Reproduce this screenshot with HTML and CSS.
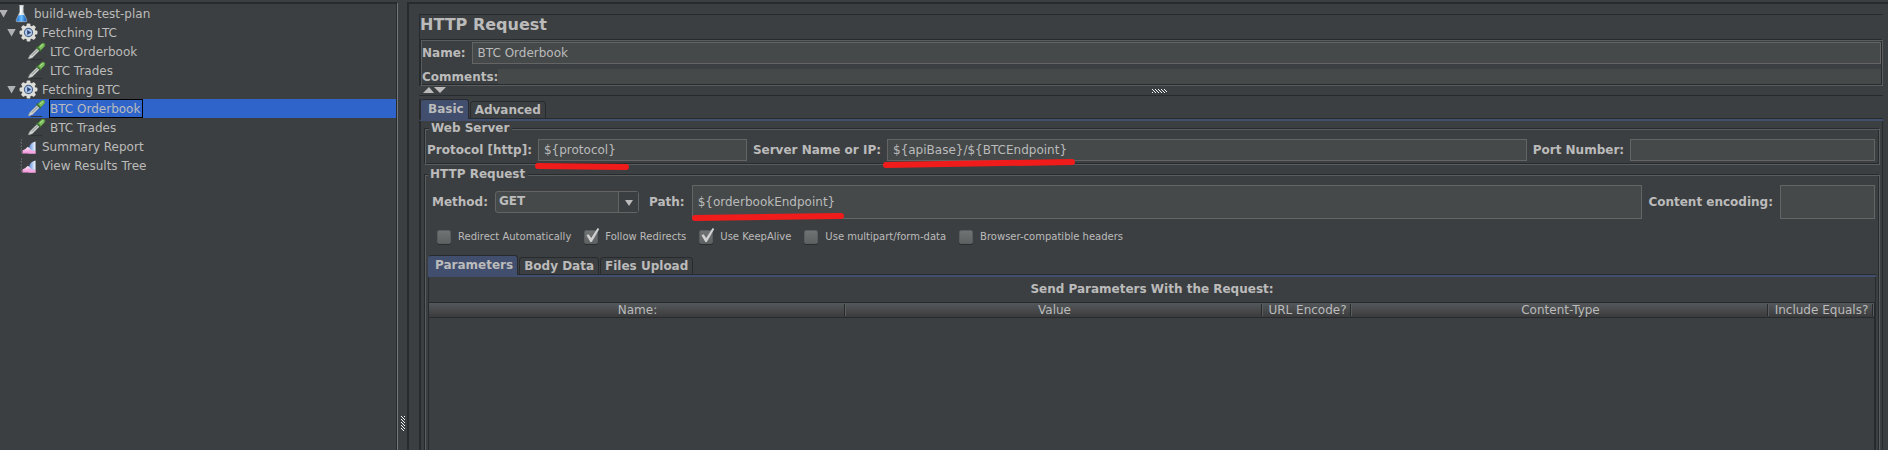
FILE: index.html
```html
<!DOCTYPE html>
<html lang="en">
<head>
<meta charset="utf-8">
<title>build-web-test-plan</title>
<link rel="stylesheet" href="styles.css">
</head>
<body>
<svg class="defs" width="0" height="0" aria-hidden="true">
  <defs>
    <linearGradient id="liquid" x1="0" x2="1" y1="0" y2="0"><stop offset="0" stop-color="#1c6ed8"/><stop offset=".5" stop-color="#6cc0ff"/><stop offset="1" stop-color="#0d4fb4"/></linearGradient>
    <linearGradient id="pink" x1="0" x2="0" y1="0" y2="1"><stop offset="0" stop-color="#fff0fb"/><stop offset="1" stop-color="#f08ad6"/></linearGradient>
    <linearGradient id="blue" x1="0" x2="1" y1="0" y2="0"><stop offset="0" stop-color="#5f8fe0"/><stop offset="1" stop-color="#f4f8ff"/></linearGradient>
    <pattern id="dots" width="3" height="3" patternUnits="userSpaceOnUse"><path fill="#f4f4f4" d="M0 0h1v1H0zM1 1h1v1H1zM2 2h1v1H2z"/></pattern>
    <symbol id="flask" viewBox="0 0 14 20">
      <path d="M5 2.500v6L1.200 17q-.5 2 1.300 2h9q1.800 0 1.300-2L9 8.500v-6z" fill="#dfe6ea" stroke="#8d979c" stroke-width=".6"/>
      <path d="M4 11.500h6l2.400 5.500q.3 1.500-1 1.500H2.600q-1.300 0-1-1.500z" fill="url(#liquid)"/>
      <path d="M4.500 1h5l-.7 1.800H5.200z" fill="#fff"/>
      <path d="M5.800 3h1.200v6L5 13z" fill="#fff"/>
    </symbol>
    <symbol id="gear" viewBox="0 0 20 20">
      <g fill="#deded9">
        <rect x="8" y=".6" width="4" height="18.800" rx="1"/>
        <rect x="8" y=".6" width="4" height="18.800" rx="1" transform="rotate(45 10 10)"/>
        <rect x="8" y=".6" width="4" height="18.800" rx="1" transform="rotate(90 10 10)"/>
        <rect x="8" y=".6" width="4" height="18.800" rx="1" transform="rotate(135 10 10)"/>
        <circle cx="10" cy="10" r="7.400"/>
      </g>
      <circle cx="10" cy="10" r="4.300" fill="#b4c8e8" stroke="#4a658e" stroke-width="1.200"/>
      <path d="M8.600 7.400l4.200 2.600-4.200 2.600z" fill="#27477a"/>
    </symbol>
    <symbol id="dropper" viewBox="0 0 20 19">
      <path d="M4 18h12" stroke="#2c2e2f" stroke-width="1"/>
      <path d="M1.200 17l2-3.500 8-8 2.500 2.500-8 8-3 1z" fill="#d3d7d5" stroke="#8b8f8e" stroke-width=".6"/>
      <path d="M5 14l7-7" stroke="#7b807f" stroke-width="1"/>
      <path d="M10 4.500l4.500 4.500" stroke="#396d2c" stroke-width="1.800"/>
      <path d="M11.500 5l3.500-3.500q2-1.500 3.300-.3t-.1 3.300L14.500 8.200z" fill="#7dbf5e" stroke="#4c8737" stroke-width=".7"/>
      <path d="M13.800 4.500l3-2.500" stroke="#b9e69b" stroke-width="1"/>
    </symbol>
    <symbol id="chart" viewBox="0 0 17 17">
      <path d="M1.500 1v14.500M0 4.500h1M0 8.500h1M0 12.500h1M1.500 15.500h15" stroke="#5c6061" stroke-width="1" stroke-dasharray="2 1" fill="none"/>
      <path d="M2.500 15.500v-3q3-1 5-3.500 2.500 0 4 2.500l4 1.500v2.500z" fill="url(#pink)"/>
      <path d="M15.500 3.500V13q-4.500 0-6.500-3.500 1.500-5 6.500-6z" fill="url(#blue)"/>
      <path d="M9 11.500q2.500 2 6.500 2v2H8.500z" fill="#f3a6e2"/>
    </symbol>
  </defs>
</svg>

<div class="app">
  <nav class="sidebar" aria-label="Test plan">
    <ul class="tree">
      <li class="node root"><span class="toggle"></span><svg class="icon icon-flask"><use href="#flask"/></svg><span class="text">build-web-test-plan</span></li>
      <li class="node group"><span class="toggle"></span><svg class="icon icon-gear"><use href="#gear"/></svg><span class="text">Fetching LTC</span></li>
      <li class="node leaf"><svg class="icon icon-dropper"><use href="#dropper"/></svg><span class="text">LTC Orderbook</span></li>
      <li class="node leaf"><svg class="icon icon-dropper"><use href="#dropper"/></svg><span class="text">LTC Trades</span></li>
      <li class="node group"><span class="toggle"></span><svg class="icon icon-gear"><use href="#gear"/></svg><span class="text">Fetching BTC</span></li>
      <li class="node leaf selected"><svg class="icon icon-dropper"><use href="#dropper"/></svg><span class="text">BTC Orderbook</span></li>
      <li class="node leaf"><svg class="icon icon-dropper"><use href="#dropper"/></svg><span class="text">BTC Trades</span></li>
      <li class="node report"><svg class="icon icon-chart"><use href="#chart"/></svg><span class="text">Summary Report</span></li>
      <li class="node report"><svg class="icon icon-chart"><use href="#chart"/></svg><span class="text">View Results Tree</span></li>
    </ul>
  </nav>
  <div class="splitter"><svg width="4" height="15"><rect width="4" height="15" fill="url(#dots)"/></svg></div>

  <main class="main">
    <section class="summary">
      <h1 class="title">HTTP Request</h1>
      <div class="identity">
        <div class="row"><label for="name">Name:</label><input class="field grow" id="name" type="text" value="BTC Orderbook"></div>
        <div class="row comments"><label for="comments">Comments:</label><input class="field plain grow" id="comments" type="text"></div>
      </div>
    </section>
    <div class="collapse">
      <span class="arrows"><svg width="24" height="6" viewBox="0 0 24 6"><path fill="#bbb" d="M0 6L6 0l5 6zM11 0h12l-6 6z"/></svg></span>
      <svg width="15" height="4"><rect width="15" height="4" fill="url(#dots)"/></svg>
    </div>

    <section class="panel">
      <div class="tabs outer-tabs" role="tablist">
        <button class="tab active" role="tab" aria-selected="true">Basic</button>
        <button class="tab" role="tab" aria-selected="false">Advanced</button>
      </div>
      <div class="panel-body">
        <fieldset class="group-box">
          <legend>Web Server</legend>
          <div class="row server">
            <label for="protocol">Protocol [http]:</label>
            <div class="slot slot-protocol"><input class="field" id="protocol" type="text" value="${protocol}">
              <svg class="mark mark-protocol" width="94" height="8"><path d="M3 3l88 1"/></svg></div>
            <label for="server">Server Name or IP:</label>
            <div class="slot slot-server"><input class="field" id="server" type="text" value="${apiBase}/${BTCEndpoint}">
              <svg class="mark mark-server" width="192" height="9"><path d="M3 6l186-3"/></svg></div>
            <label for="port">Port Number:</label>
            <div class="slot slot-port"><input class="field" id="port" type="text"></div>
          </div>
        </fieldset>

        <fieldset class="group-box request">
          <legend>HTTP Request</legend>
          <div class="row method">
            <label for="method">Method:</label>
            <div class="combo"><select id="method"><option>GET</option></select><span class="combo-arrow"></span></div>
            <label class="path-label" for="path">Path:</label>
            <div class="slot grow"><input class="field tall" id="path" type="text" value="${orderbookEndpoint}">
              <svg class="mark mark-path" width="152" height="9"><path d="M3 5l146-2"/></svg></div>
            <label for="encoding">Content encoding:</label>
            <div class="slot slot-encoding"><input class="field tall" id="encoding" type="text"></div>
          </div>
          <div class="checks">
            <label class="check"><input type="checkbox">Redirect Automatically</label>
            <label class="check"><input type="checkbox" checked>Follow Redirects</label>
            <label class="check"><input type="checkbox" checked>Use KeepAlive</label>
            <label class="check"><input type="checkbox">Use multipart/form-data</label>
            <label class="check"><input type="checkbox">Browser-compatible headers</label>
          </div>
          <div class="inner">
            <div class="tabs" role="tablist">
              <button class="tab active" role="tab" aria-selected="true">Parameters</button>
              <button class="tab" role="tab" aria-selected="false">Body Data</button>
              <button class="tab" role="tab" aria-selected="false">Files Upload</button>
            </div>
            <div class="params">
              <h2 class="caption">Send Parameters With the Request:</h2>
              <div class="table-wrap">
                <table class="table">
                  <colgroup><col><col><col class="col-encode"><col><col class="col-equals"></colgroup>
                  <thead><tr><th>Name:</th><th>Value</th><th>URL Encode?</th><th>Content-Type</th><th>Include Equals?</th></tr></thead>
                  <tbody></tbody>
                </table>
              </div>
            </div>
          </div>
        </fieldset>
      </div>
    </section>
  </main>
</div>
</body>
</html>
```
FILE: styles.css
```css
:root {
  --bg: #3c3f41;
  --dark: #282b2d;
  --light: #5a5d5e;
  --field: #45494a;
  --edge: #646464;
  --text: #bbbbbb;
  --accent: #414e6d;
}

* { box-sizing: border-box; }

body {
  margin: 0;
  background: var(--bg);
  color: var(--text);
  font: 12px/14px "DejaVu Sans", Verdana, sans-serif;
}

input, select, button { font: inherit; color: inherit; }

.defs { position: absolute; }

.app {
  display: flex;
  height: 100vh;
  padding-top: 2px;
  overflow: hidden;
}

/* Tree */
.sidebar {
  flex: 0 0 398px;
  border-top: 2px solid var(--dark);
  border-right: 1px solid #75787a;
}

.tree {
  height: 100%;
  margin: 0;
  padding: 0;
  list-style: none;
  border-right: 1px solid var(--dark);
}

.node {
  display: flex;
  align-items: center;
  height: 19px;
}

.toggle {
  width: 9px;
  height: 8px;
  background: #afb1b3;
  clip-path: polygon(0 0, 100% 0, 50% 100%);
}

.root .toggle { margin-left: -1px; }
.group { padding-left: 7px; }
.leaf { padding-left: 27px; }
.report { padding-left: 20px; }

.icon { flex: none; }
.icon-flask { width: 13px; height: 19px; margin: 0 6px 0 7px; }
.icon-gear { width: 19px; height: 19px; margin: 0 4px 0 3px; }
.icon-dropper { width: 19px; height: 19px; margin-right: 3px; }
.icon-chart { width: 17px; height: 17px; margin-right: 5px; }

.text {
  height: 19px;
  padding: 1px 2px 0 0;
  border: 1px solid transparent;
  line-height: 17px;
}

.root .text, .group .text, .report .text { border-left: 0; }

.selected { background: #2f65ca; }
.selected .text { border-color: #000; }

.splitter {
  display: flex;
  flex: 0 0 9px;
  align-items: end;
  justify-content: center;
  padding-bottom: 19px;
}

/* Main pane */
.main {
  display: flex;
  flex: 1;
  flex-direction: column;
  min-width: 0;
  padding: 10px 5px 0 10px;
  border-top: 2px solid var(--dark);
  border-left: 2px solid var(--dark);
}

.summary {
  flex: none;
  border-top: 1px solid var(--dark);
  border-left: 1px solid var(--dark);
}

.title {
  height: 24px;
  margin: 0;
  font-size: 16px;
  line-height: 20px;
}

/* Etched frame: a dark line with a light line beside it */
.identity, .group-box {
  border: 1px solid;
  border-color: var(--dark) var(--light) var(--light) var(--dark);
  box-shadow: inset 1px 1px var(--light), inset -1px -1px var(--dark);
}

.identity {
  display: flex;
  flex-direction: column;
  gap: 5px;
  padding: 2px 1px 1px 1px;
}

.row {
  display: flex;
  align-items: center;
  gap: 6px;
}

.row label {
  font-weight: bold;
  white-space: nowrap;
}

.comments { gap: 0; }

.grow { flex: 1; }

.field {
  display: block;
  width: 100%;
  height: 22px;
  min-width: 0;
  padding: 0 5px;
  border: 1px solid var(--edge);
  background: var(--field);
  outline: 0;
}

.identity .field { width: auto; }
.plain { height: 15px; border: 0; }
.tall { height: 34px; }

.collapse {
  display: flex;
  position: relative;
  flex: none;
  align-items: center;
  justify-content: center;
  height: 9px;
  padding-left: 16px;
}

.arrows {
  position: absolute;
  left: 4px;
  top: 1px;
  display: flex;
}

/* Tabs */
.panel {
  display: flex;
  flex: 1;
  flex-direction: column;
  min-height: 0;
  padding-top: 3px;
  border-top: 1px solid var(--dark);
}

.tabs {
  display: flex;
  flex: none;
  gap: 1px;
  align-items: end;
  border-bottom: 2px solid var(--accent);
  box-shadow: inset 0 -1px var(--dark);
}

.outer-tabs { border-left: 2px solid var(--dark); }

.tab {
  height: 18px;
  padding: 0 4px;
  border: 1px solid var(--dark);
  border-radius: 3px 3px 0 0;
  background: var(--bg);
  font-weight: bold;
  line-height: 16px;
}

.tab.active {
  height: 20px;
  padding: 0 4px 2px 6px;
  border-bottom: 0;
  border-left-color: var(--accent);
  background: var(--accent);
}

.panel-body {
  display: flex;
  flex: 1;
  flex-direction: column;
  min-height: 0;
  padding: 0 2px 0 3px;
  border: 2px solid var(--dark);
  border-width: 0 1px 0 2px;
}

/* Titled groups */
.group-box {
  flex: none;
  min-width: 0;
  margin: 0;
  padding: 4px 4px 3px 2px;
}

.group-box legend {
  margin-left: 2px;
  padding: 0 3px 0 2px;
  background: var(--bg);
  font-weight: bold;
}

.request {
  flex: 1;
  min-height: 0;
  margin: 2px 0 -2px;
  padding: 4px 1px 0;
}

.slot { position: relative; }
.slot-protocol { flex: 209 1 0; }
.slot-server { flex: 640 1 0; }
.slot-port { flex: 245 1 0; }
.slot-encoding { flex: 0 0 95px; }

.mark {
  position: absolute;
  overflow: visible;
  fill: none;
  stroke: #f01c1b;
  stroke-width: 6px;
  stroke-linecap: round;
}

.mark-protocol { left: -3px; top: 24px; }
.mark-server { left: -4px; top: 20px; }
.mark-path { left: 0; top: 28px; }

.method { padding: 0 3px 0 6px; }
.method label { margin-right: 1px; }
.path-label { margin-left: 4px; }

.combo {
  display: flex;
  position: relative;
  width: 144px;
  height: 22px;
}

.combo select {
  width: 100%;
  padding: 0 24px 2px 3px;
  border: 1px solid var(--edge);
  border-radius: 3px;
  background: var(--field);
  font-weight: bold;
  appearance: none;
  outline: 0;
}

.combo-arrow {
  position: absolute;
  top: 1px;
  right: 1px;
  width: 20px;
  height: 20px;
  border-left: 1px solid var(--edge);
  background: var(--bg);
  pointer-events: none;
}

.combo-arrow::after {
  content: "";
  display: block;
  width: 8px;
  height: 6px;
  margin: 8px 0 0 6px;
  background: var(--text);
  clip-path: polygon(0 0, 100% 0, 50% 100%);
}

.checks {
  display: flex;
  gap: 13px;
  height: 36px;
  padding-left: 11px;
  font-size: 10px;
}

.check {
  display: flex;
  align-items: center;
  gap: 7px;
}

.check input {
  position: relative;
  width: 14px;
  height: 14px;
  margin: 0;
  border: 1px solid #5a5d5f;
  border-radius: 2px;
  background: linear-gradient(#707374, #5f6263);
  box-shadow: 0 1px #2b2d2e;
  appearance: none;
}

.check input:checked::after {
  content: "";
  position: absolute;
  inset: -3px -2px 1px 0;
  background: #d0d0d0;
  clip-path: polygon(8% 52%, 24% 44%, 42% 72%, 88% 0, 100% 8%, 46% 100%, 36% 100%);
}

/* Parameters */
.inner { padding: 0 2px; }

.params {
  border: 1px solid var(--dark);
  border-width: 0 1px;
}

.caption {
  margin: 0;
  font-size: 12px;
  line-height: 25px;
  text-align: center;
}

.table-wrap {
  height: 100vh;
  border: 1px solid var(--dark);
  border-width: 1px 1px 0 0;
}

.table {
  width: 100%;
  table-layout: fixed;
  border-collapse: collapse;
}

.col-encode { width: 89px; }
.col-equals { width: 105px; }

.table thead {
  background: linear-gradient(#54585b, #3b3b3c);
  box-shadow: 0 1px var(--dark);
}

.table th {
  height: 14px;
  padding: 0;
  font-weight: normal;
  line-height: 14px;
  background: linear-gradient(var(--dark), var(--dark)) right 1px top 1px / 1px 12px no-repeat, linear-gradient(var(--light), var(--light)) right 0 top 1px / 1px 12px no-repeat;
}
```
